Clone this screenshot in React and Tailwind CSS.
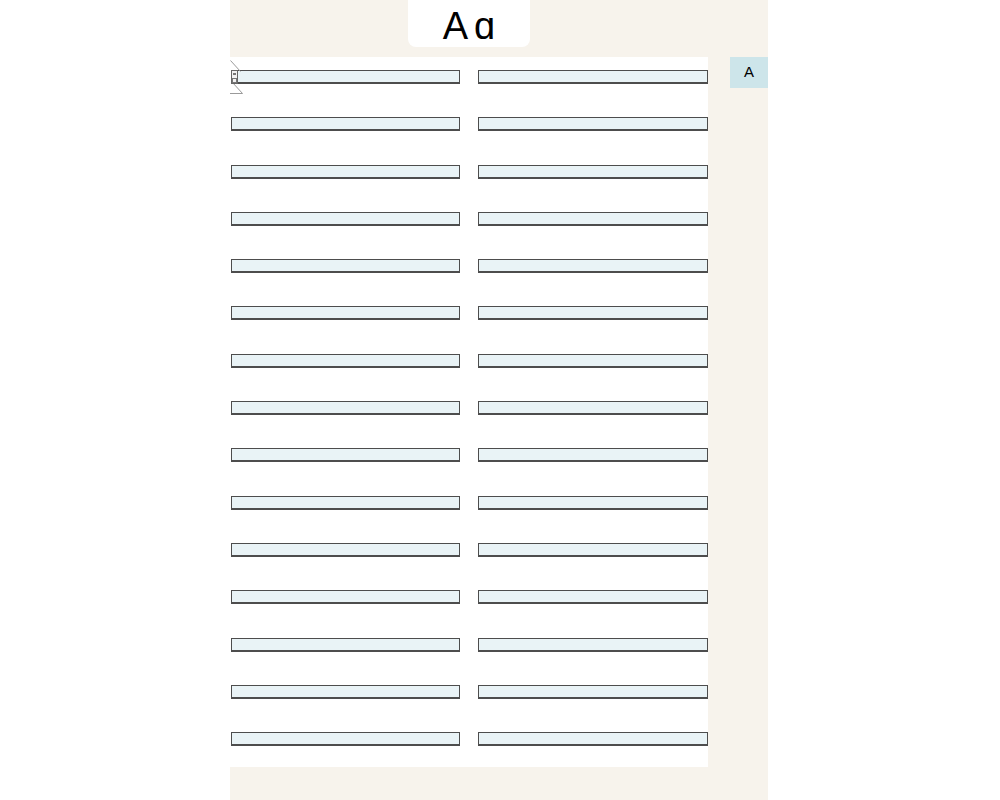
import React from 'react';

const rows = Array.from({ length: 15 }, (_, i) => i);

const FoldMark = () => (
    <svg width="14" height="34" viewBox="0 0 14 34" className="absolute left-0 top-[3px]">
        <path d="M0.5 0.5 L10.5 11.5" stroke="#9a9a9a" strokeWidth="1" fill="none" />
        <path d="M2.5 22.5 L12.5 33.5 L0 33.5" stroke="#9a9a9a" strokeWidth="1" fill="none" />
        <rect x="1.5" y="10.5" width="6" height="13" fill="#f2f2f2" stroke="#666" />
        <rect x="3" y="13" width="3" height="2" fill="#777" />
        <rect x="2.5" y="18.5" width="4" height="4" fill="none" stroke="#777" />
    </svg>
);

const App = () => {
    return (
        <div className="w-[1000px] h-[800px] bg-white flex" style={{ fontFamily: '"Liberation Sans", Arial, sans-serif' }}>
            <div className="ml-[230px] w-[538px] h-full bg-[#f7f3ec] flex flex-col">
                <div className="flex">
                    <div className="ml-[178px] w-[122px] h-[47px] bg-white rounded-b-[8px] flex items-center justify-center text-[38px] leading-none text-black tracking-[6px] pl-[6px] pt-[4px]">
                        Aɑ
                    </div>
                </div>
                <div className="flex mt-[10px]">
                    <div className="relative w-[478px] h-[710px] bg-white pt-[13px]">
                        <FoldMark />
                        <div className="grid grid-cols-2 gap-x-[18px] gap-y-[33.3px]">
                            {rows.map(i => (
                                <React.Fragment key={i}>
                                    <div className="h-[14px] ml-[1px] bg-[#e9f3f6] border border-[#4d4d4d] border-b-[2px]" />
                                    <div className="h-[14px] bg-[#e9f3f6] border border-[#4d4d4d] border-b-[2px]" />
                                </React.Fragment>
                            ))}
                        </div>
                    </div>
                    <div className="w-[22px]" />
                    <div className="w-[38px] h-[31px] bg-[#cde5ea] flex items-center justify-center text-[15px] text-black">
                        A
                    </div>
                </div>
            </div>
        </div>
    );
};

export default App;
